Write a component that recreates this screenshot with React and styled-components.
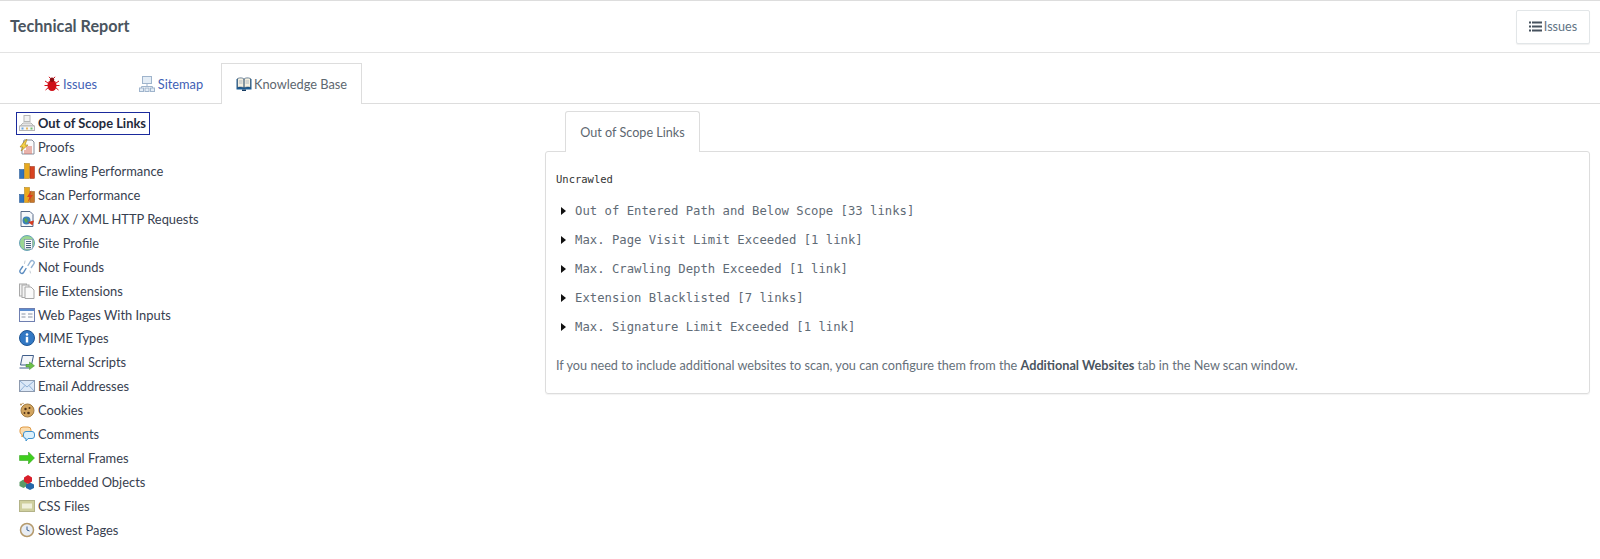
import { createGlobalStyle, styled } from "styled-components"

const GlobalStyle = createGlobalStyle`
  html, body {
    margin: 0;
    padding: 0;
    background: #fff;
    font-family: "Lato", "Noto Sans", sans-serif;
    color: #4a5560;
  }
`

const Page = styled.div`
  width: 1600px;
  height: 559px;
  overflow: hidden;
  border-top: 1px solid #ddd;
  box-sizing: border-box;
`

const Header = styled.header`
  display: flex;
  align-items: center;
  justify-content: space-between;
  height: 51px;
  padding: 0 10px;
  border-bottom: 1px solid #e3e3e3;
`

const Title = styled.h1`
  margin: 0 0 2px;
  font-size: 16.2px;
  font-weight: 700;
  color: #4a5560;
`

const IssuesButton = styled.button`
  display: flex;
  align-items: center;
  gap: 2px;
  width: 74px;
  height: 34px;
  justify-content: center;
  padding: 0;
  background: #fff;
  border: 1px solid #e2e6e8;
  border-radius: 2px;
  box-shadow: 0 1px 1px rgba(0, 0, 0, 0.06);
  font: 12.6px "Lato", sans-serif;
  color: #5f7484;
`

const TabBar = styled.nav`
  display: flex;
  align-items: flex-end;
  height: 51px;
  padding-left: 24px;
  border-bottom: 1px solid #ddd;
  box-sizing: border-box;
`

const Tab = styled.a`
  display: flex;
  align-items: center;
  justify-content: center;
  gap: ${(p) => p.$gap}px;
  width: ${(p) => p.$width}px;
  padding-left: ${(p) => p.$inset || 0}px;
  box-sizing: border-box;
  font-size: 12.8px;
  color: ${(p) => (p.$active ? "#5d6770" : "#3f5fb5")};
  background: #fff;
  border: 1px solid ${(p) => (p.$active ? "#ddd" : "transparent")};
  border-bottom: 0;
  margin-bottom: ${(p) => (p.$active ? "-1px" : "0")};
  height: ${(p) => (p.$active ? "41px" : "40px")};
`

const Main = styled.main`
  display: grid;
  grid-template-columns: 545px 1045px;
`

const SideList = styled.ul`
  list-style: none;
  margin: 0;
  padding: 7.5px 0 0 16px;
`

const SideItem = styled.li`
  display: flex;
  align-items: center;
  gap: 3px;
  width: 134px;
  height: 23.9px;
  padding-left: 3px;
  box-sizing: border-box;
  white-space: nowrap;
  font-size: 12.9px;
  font-weight: ${(p) => (p.$active ? 700 : 400)};
  color: ${(p) => (p.$active ? "#1f2a3c" : "#37404f")};
  outline: ${(p) => (p.$active ? "1px solid #1a2a9c" : "none")};
  outline-offset: -1px;
`

const Content = styled.section`
  padding-top: 7px;
`

const SubTabs = styled.div`
  display: flex;
  padding-left: 20px;
`

const SubTab = styled.div`
  display: flex;
  align-items: center;
  justify-content: center;
  width: 135px;
  height: 41px;
  box-sizing: border-box;
  font-size: 12.6px;
  color: #5d6770;
  background: #fff;
  border: 1px solid #ddd;
  border-bottom: 0;
  border-radius: 3px 3px 0 0;
  margin-bottom: -1px;
  position: relative;
  z-index: 1;
`

const Panel = styled.div`
  height: 243px;
  padding: 0 10px;
  box-sizing: border-box;
  border: 1px solid #ddd;
  border-radius: 3px;
  box-shadow: 0 1px 1px rgba(0, 0, 0, 0.05);
`

const SectionLabel = styled.div`
  margin-top: 19px;
  height: 16px;
  line-height: 16px;
  font-family: "DejaVu Sans Mono", monospace;
  font-size: 10.5px;
  color: #333;
`

const LinkGroups = styled.div`
  margin-top: 10px;
  display: flex;
  flex-direction: column;
`

const LinkGroup = styled.div`
  display: flex;
  align-items: center;
  height: 28.8px;
  padding-left: 5px;
  font-family: "DejaVu Sans Mono", monospace;
  font-size: 12.25px;
  color: #5f6b76;
  white-space: pre;
`

const Caret = styled.span`
  width: 0;
  height: 0;
  margin-right: 9px;
  border-left: 5px solid #111;
  border-top: 4.5px solid transparent;
  border-bottom: 4.5px solid transparent;
`

const Note = styled.p`
  margin: 15px 0 0;
  font-size: 12.7px;
  line-height: 18px;
  color: #66707a;

  b {
    font-weight: 700;
    color: #4a5560;
  }
`

const IconSvg = styled.svg`
  flex: none;
  width: 16px;
  height: 16px;
`

const BugIcon = () => (
  <IconSvg viewBox="0 0 16 16">
    <g stroke="#d3121a" strokeWidth="1" fill="none">
      <path d="M1 5l3 2M0.5 9.500H4M1.500 14l3-2.500M15 5l-3 2M15.500 9.500H12M14.500 14l-3-2.500M6 2L5 .8M10 2l1-1.200" />
    </g>
    <ellipse cx="8" cy="9.500" rx="4.500" ry="5.500" fill="#cf0f18" />
    <circle cx="8" cy="3.800" r="2.300" fill="#8e0d12" />
  </IconSvg>
)

const NetworkIcon = ({ color = "#9fb4cc", fill = "#e4edf6" }) => (
  <IconSvg viewBox="0 0 16 16">
    <rect x="3.500" y="0.500" width="9" height="7" fill={fill} stroke={color} />
    <path d="M8 8v2.500M2.500 12v-1.500h11V12" stroke={color} fill="none" />
    <rect x="0.500" y="12" width="4" height="3.500" fill={fill} stroke={color} />
    <rect x="6" y="12" width="4" height="3.500" fill={fill} stroke={color} />
    <rect x="11.500" y="12" width="4" height="3.500" fill={fill} stroke={color} />
  </IconSvg>
)

const BookIcon = () => (
  <IconSvg viewBox="0 0 16 16">
    <path d="M0.500 3h15v10.500h-15z" fill="#1d5c94" />
    <path d="M1.500 2.500c2.500-1 5-.8 6.500.5v9c-1.500-1-4-1.200-6.500-.5zM14.500 2.500c-2.500-1-5-.8-6.500.5v9c1.500-1 4-1.200 6.500-.5z" fill="#f4efe0" stroke="#1b3f66" strokeWidth=".6" />
    <path d="M3 5h3.500M3 7h3.500M9.500 5H13M9.500 7H13" stroke="#93a4b5" strokeWidth=".7" />
    <rect x="6" y="13.500" width="4" height="1.500" fill="#173c63" />
  </IconSvg>
)

const ScopeIcon = () => (
  <IconSvg viewBox="0 0 16 16">
    <rect x="5" y="0.500" width="6" height="6" fill="#f2f2f2" stroke="#b5b5b5" />
    <path d="M1 11l3-3h8l3 3z" fill="#e6e6e6" stroke="#b5b5b5" />
    <rect x="0.500" y="11" width="15" height="4.500" fill="#f6f6f6" stroke="#b5b5b5" />
    <rect x="2.500" y="12.500" width="2" height="2" fill="#6aa5e0" />
    <rect x="7" y="12.500" width="2" height="2" fill="#e8b860" />
    <rect x="11.500" y="12.500" width="2" height="2" fill="#73c277" />
  </IconSvg>
)

const ProofsIcon = () => (
  <IconSvg viewBox="0 0 16 16">
    <path d="M5 1h8l2 2v12H3V9z" fill="#fbfbfb" stroke="#8a8f9c" />
    <path d="M7 8h6M7 10h6M5 12h8M5 14h8" stroke="#d86a5a" />
    <path d="M7 0.500L1 8h3L2 12l7-6H6l2-5.500z" fill="#f6d24a" stroke="#a67f14" strokeWidth=".6" />
  </IconSvg>
)

const BarsIcon = () => (
  <IconSvg viewBox="0 0 16 16">
    <rect x="0.500" y="6.500" width="4.500" height="9" fill="#2f74c0" stroke="#1e4f8a" strokeWidth=".5" />
    <rect x="5.500" y="0.500" width="5" height="15" fill="#e8a91f" stroke="#a87a12" strokeWidth=".5" />
    <rect x="11" y="3.500" width="4.500" height="12" fill="#d8421f" stroke="#962c12" strokeWidth=".5" />
  </IconSvg>
)

const ScanBarsIcon = () => (
  <IconSvg viewBox="0 0 16 16">
    <rect x="0.500" y="7.500" width="4.500" height="8" fill="#2f74c0" stroke="#1e4f8a" strokeWidth=".5" />
    <rect x="5.500" y="0.500" width="5" height="15" fill="#e8a91f" stroke="#a87a12" strokeWidth=".5" />
    <rect x="11" y="4.500" width="4.500" height="11" fill="#c9772a" stroke="#8a5018" strokeWidth=".5" />
    <path d="M12.500 3l-4.500 7h2.500L8.500 15.500l5.500-7.500H11z" fill="#e23d1c" />
  </IconSvg>
)

const AjaxIcon = () => (
  <IconSvg viewBox="0 0 16 16">
    <path d="M2 0.500h9l3 3v12H2z" fill="#f6f8fb" stroke="#5a6d8a" />
    <circle cx="7.500" cy="9.500" r="4" fill="#3a80b8" />
    <path d="M5 9c1-2 2-2 3-1s1 3-1 4z" fill="#5aa84f" />
    <path d="M9 11l6-1.500-1.500 5z" fill="#d63b1f" />
  </IconSvg>
)

const SiteProfileIcon = () => (
  <IconSvg viewBox="0 0 16 16">
    <circle cx="8" cy="8" r="7.500" fill="#9ad692" stroke="#6aa3b8" />
    <rect x="5.500" y="4.500" width="8" height="9.500" fill="#f6f8fb" stroke="#7a90a8" strokeWidth=".6" />
    <path d="M7 6.500h5M7 8.500h5M7 10.500h5M7 12.500h5" stroke="#33506e" strokeWidth=".9" />
  </IconSvg>
)

const ChainIcon = () => (
  <IconSvg viewBox="0 0 16 16">
    <g fill="none" stroke="#5b8cc0" strokeWidth="1.400" strokeLinecap="round">
      <path d="M7 9.500l-2.500 4a2 2 0 0 1-3.300-2.300l2.500-3.700" />
      <path d="M9 6.500l2.500-4a2 2 0 0 1 3.300 2.300l-2.500 3.700" stroke="#94b3d3" />
      <path d="M5.500 4.500L6 2M11 12l.5 2" stroke="#c4ccd4" strokeWidth="1" />
    </g>
  </IconSvg>
)

const FilesIcon = () => (
  <IconSvg viewBox="0 0 16 16">
    <g fill="#f3f3f3" stroke="#a8a8a8">
      <rect x="0.500" y="1" width="7" height="12" />
      <rect x="3" y="2" width="7" height="12.500" />
      <path d="M6 4h6l3 3v8.500H6z" fill="#fafafa" />
    </g>
  </IconSvg>
)

const FormIcon = () => (
  <IconSvg viewBox="0 0 16 16">
    <rect x="0.500" y="1.500" width="15" height="13" fill="#fafbfd" stroke="#6f7fb0" />
    <rect x="1" y="2" width="14" height="2" fill="#5a8cd0" />
    <path d="M2.500 7h4M2.500 10h4M9 7h4.500M9 10h4.500" stroke="#8a94a5" />
  </IconSvg>
)

const InfoIcon = () => (
  <IconSvg viewBox="0 0 16 16">
    <circle cx="8" cy="8" r="7.500" fill="#3278c4" stroke="#1f5593" />
    <circle cx="8" cy="4.500" r="1.300" fill="#fff" />
    <rect x="6.800" y="6.800" width="2.400" height="5.700" fill="#fff" />
  </IconSvg>
)

const ScriptIcon = () => (
  <IconSvg viewBox="0 0 16 16">
    <path d="M3.500 1.500h11L12.500 11h-11z" fill="#f4f6fa" stroke="#3f5d8a" />
    <path d="M0.500 14h10" stroke="#3f5d8a" />
    <path d="M7 10.500h3.500V8l5 3.800-5 3.700V13H7z" fill="#6cc04a" stroke="#3f8a2a" strokeWidth=".5" />
  </IconSvg>
)

const MailIcon = () => (
  <IconSvg viewBox="0 0 16 16">
    <rect x="0.500" y="2.500" width="15" height="11" fill="#dce8f7" stroke="#8d9aae" />
    <path d="M1 3l7 6 7-6M1 13l5-5.500M15 13l-5-5.500" stroke="#8fb0d6" fill="none" />
  </IconSvg>
)

const CookieIcon = () => (
  <IconSvg viewBox="0 0 16 16">
    <circle cx="8.500" cy="8.500" r="6.500" fill="#d2a45e" stroke="#a07a40" />
    <circle cx="6.500" cy="7" r="1.200" fill="#4e3015" />
    <circle cx="10.500" cy="6" r="1" fill="#4e3015" />
    <circle cx="9.500" cy="11" r="1.300" fill="#4e3015" />
    <circle cx="5.500" cy="11" r=".9" fill="#4e3015" />
    <circle cx="2" cy="2.500" r="1" fill="#b68a4c" />
    <circle cx="4" cy="1.500" r=".7" fill="#b68a4c" />
  </IconSvg>
)

const CommentsIcon = () => (
  <IconSvg viewBox="0 0 16 16">
    <path d="M1 4a3 3 0 0 1 3-3h5a3 3 0 0 1 3 3v2a3 3 0 0 1-3 3H4l-1 2V8.500A3 3 0 0 1 1 6z" fill="#fbdcae" stroke="#e09a45" />
    <path d="M4.500 8a2.500 2.500 0 0 1 2.500-2.500h6A2.500 2.500 0 0 1 15.500 8v2a2.500 2.500 0 0 1-2.500 2.500H9L7 15v-2.500A2.500 2.500 0 0 1 4.500 10z" fill="#dcf0fc" stroke="#3f92cf" />
  </IconSvg>
)

const ArrowIcon = () => (
  <IconSvg viewBox="0 0 16 16">
    <path d="M0.500 5.500h9V2l6 6-6 6v-3.500h-9z" fill="#3fce1e" stroke="#2a9c15" strokeWidth=".5" />
  </IconSvg>
)

const BlocksIcon = () => (
  <IconSvg viewBox="0 0 16 16">
    <path d="M0.500 8l4-2.500L8 8v4l-3.500 2L.5 12z" fill="#5b9a68" />
    <path d="M7 10.500l4-2 4 2v3.500l-4 2-4-2z" fill="#2566a8" />
    <path d="M5 3.500L9 1l4 2.500v4L9 10 5 7.500z" fill="#d81e2a" />
  </IconSvg>
)

const CssIcon = () => (
  <IconSvg viewBox="0 0 16 16">
    <rect x="0.500" y="2.500" width="15" height="11" fill="#cfcf9e" stroke="#b3b388" />
    <rect x="3" y="5.500" width="10" height="5" fill="#f0f0dc" />
  </IconSvg>
)

const ClockIcon = () => (
  <IconSvg viewBox="0 0 16 16">
    <circle cx="8" cy="8" r="6.500" fill="#e8edf4" stroke="#b59a6c" strokeWidth="1.500" />
    <path d="M8 4.500V8l2.500 1" stroke="#3b5f90" fill="none" />
  </IconSvg>
)

const ListIcon = () => (
  <svg width="13" height="11" viewBox="0 0 13 11" fill="#46525e">
    <rect x="0" y="0.500" width="2" height="2" />
    <rect x="0" y="4.500" width="2" height="2" />
    <rect x="0" y="8.500" width="2" height="2" />
    <rect x="3" y="0.500" width="10" height="2" />
    <rect x="3" y="4.500" width="10" height="2" />
    <rect x="3" y="8.500" width="10" height="2" />
  </svg>
)

const sideItems = [
  ["Out of Scope Links", ScopeIcon],
  ["Proofs", ProofsIcon],
  ["Crawling Performance", BarsIcon],
  ["Scan Performance", ScanBarsIcon],
  ["AJAX / XML HTTP Requests", AjaxIcon],
  ["Site Profile", SiteProfileIcon],
  ["Not Founds", ChainIcon],
  ["File Extensions", FilesIcon],
  ["Web Pages With Inputs", FormIcon],
  ["MIME Types", InfoIcon],
  ["External Scripts", ScriptIcon],
  ["Email Addresses", MailIcon],
  ["Cookies", CookieIcon],
  ["Comments", CommentsIcon],
  ["External Frames", ArrowIcon],
  ["Embedded Objects", BlocksIcon],
  ["CSS Files", CssIcon],
  ["Slowest Pages", ClockIcon],
]

const linkGroups = [
  "Out of Entered Path and Below Scope [33 links]",
  "Max. Page Visit Limit Exceeded [1 link]",
  "Max. Crawling Depth Exceeded [1 link]",
  "Extension Blacklisted [7 links]",
  "Max. Signature Limit Exceeded [1 link]",
]

const App = () => {
  return (
    <Page>
      <GlobalStyle />
      <Header>
        <Title>Technical Report</Title>
        <IssuesButton>
          <ListIcon />
          Issues
        </IssuesButton>
      </Header>
      <TabBar>
        <Tab $width={93} $gap={3}><BugIcon />Issues</Tab>
        <Tab $width={104} $gap={3} $inset={4}><NetworkIcon />Sitemap</Tab>
        <Tab $width={141} $gap={2} $active><BookIcon />Knowledge Base</Tab>
      </TabBar>
      <Main>
        <SideList>
          {sideItems.map(([label, Icon], i) => (
            <SideItem key={label} $active={i === 0}>
              <Icon />
              {label}
            </SideItem>
          ))}
        </SideList>
        <Content>
          <SubTabs>
            <SubTab>Out of Scope Links</SubTab>
          </SubTabs>
          <Panel>
            <SectionLabel>Uncrawled</SectionLabel>
            <LinkGroups>
              {linkGroups.map((text) => (
                <LinkGroup key={text}>
                  <Caret />
                  {text}
                </LinkGroup>
              ))}
            </LinkGroups>
            <Note>
              If you need to include additional websites to scan, you can configure them from the{" "}
              <b>Additional Websites</b> tab in the New scan window.
            </Note>
          </Panel>
        </Content>
      </Main>
    </Page>
  )
}

export default App
